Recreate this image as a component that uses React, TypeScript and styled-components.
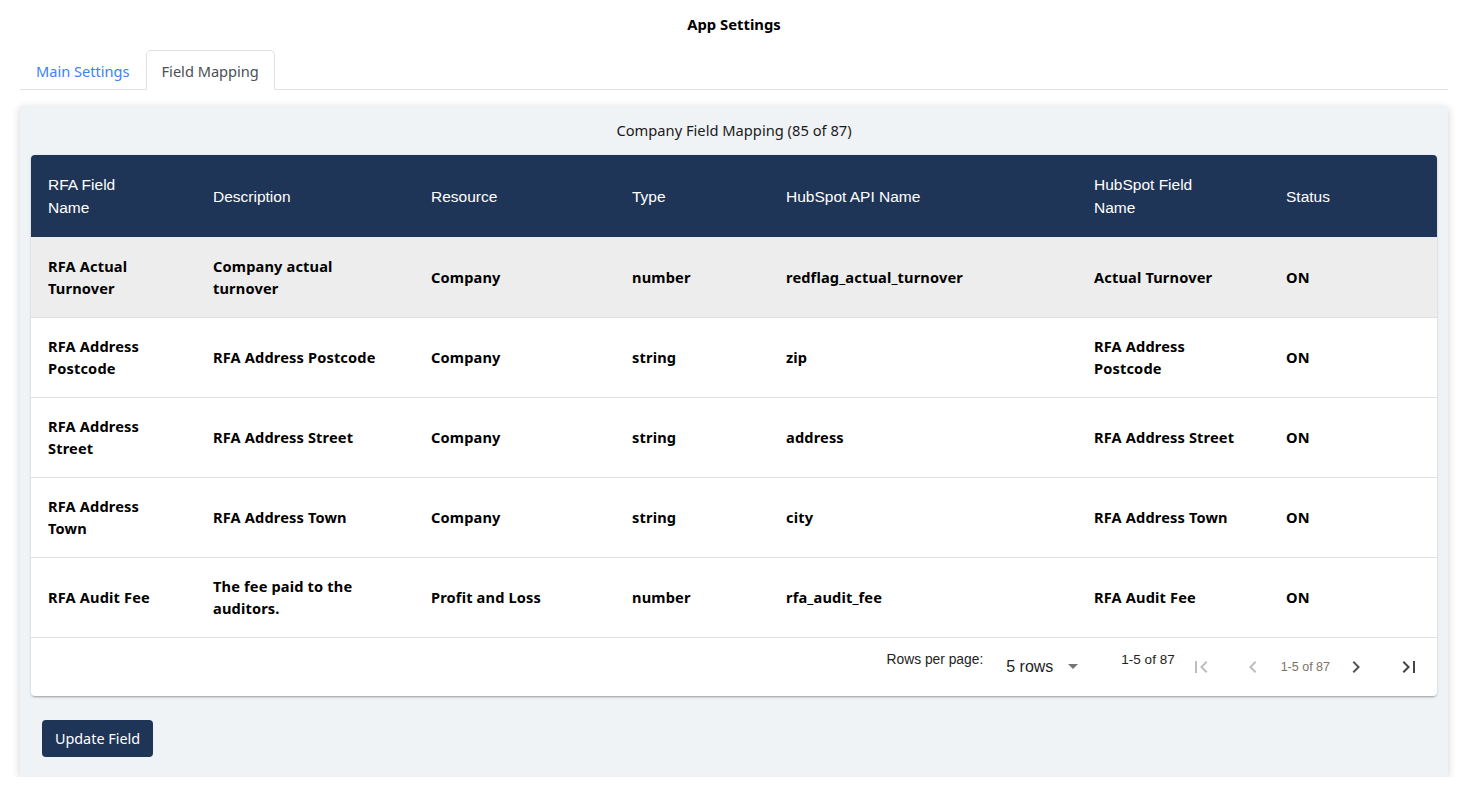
import React from "react";
import styled, { createGlobalStyle } from "styled-components";

const Global = createGlobalStyle`
  html, body { margin: 0; padding: 0; background: #ffffff; }
  body { font-family: "Noto Sans", "Open Sans", sans-serif; color: #000; }
  * { box-sizing: border-box; }
`;

const Page = styled.div`
  padding: 0 13px 0 20px;
`;

const Title = styled.h1`
  margin: 0;
  height: 50px;
  display: flex;
  align-items: center;
  justify-content: center;
  font-size: 14.8px;
  font-weight: 700;
  padding-bottom: 2px;
`;

const TabBar = styled.div`
  display: flex;
  border-bottom: 1px solid #dee2e6;
  height: 40px;
`;

const Tab = styled.div<{ $active?: boolean }>`
  height: 40px;
  padding: 2px 15px 0;
  display: flex;
  align-items: center;
  font-size: 14.6px;
  white-space: nowrap;
  color: ${(p) => (p.$active ? "#495057" : "#3b82f6")};
  background: ${(p) => (p.$active ? "#fff" : "transparent")};
  border: 1px solid ${(p) => (p.$active ? "#dee2e6" : "transparent")};
  border-bottom-color: ${(p) => (p.$active ? "#fff" : "transparent")};
  border-radius: 5px 5px 0 0;
  margin-bottom: -1px;
`;

const Card = styled.section`
  margin-top: 16px;
  background: #f0f3f6;
  box-shadow: 0 2px 8px rgba(0, 0, 0, 0.18);
  padding: 0 11px 20px 11px;
`;

const CardTitle = styled.div`
  height: 49px;
  display: flex;
  align-items: center;
  justify-content: center;
  font-size: 14.7px;
  color: #1a1a1a;
  padding-bottom: 2px;
`;

const Paper = styled.div`
  background: #fff;
  border-radius: 4px;
  box-shadow: 0 2px 2px -1px rgba(0, 0, 0, 0.25), 0 1px 3px 0 rgba(0, 0, 0, 0.14);
  overflow: hidden;
`;

const Table = styled.table`
  width: 100%;
  border-collapse: collapse;
  table-layout: fixed;
`;

const HeadRow = styled.tr`
  background: #1f3557;
  height: 82px;
`;

const Th = styled.th`
  text-align: left;
  font-family: "Liberation Sans", Arial, sans-serif;
  font-weight: 400;
  font-size: 15.5px;
  line-height: 23px;
  color: #fff;
  padding: 0 8px 0 17px;
  vertical-align: middle;
`;

const Row = styled.tr<{ $highlight?: boolean }>`
  height: 80px;
  background: ${(p) => (p.$highlight ? "#ededed" : "#fff")};
  border-bottom: 1px solid #e0e0e0;
`;

const Td = styled.td`
  font-size: 14.6px;
  letter-spacing: 0.15px;
  font-weight: 700;
  line-height: 22px;
  color: #000;
  padding: 0 8px 0 17px;
  vertical-align: middle;
`;

const CellText = styled.div<{ $max: number }>`
  max-width: ${(p) => p.$max}px;
`;

const Footer = styled.div`
  height: 58px;
  display: flex;
  align-items: center;
  justify-content: flex-end;
  padding-right: 8px;
  font-family: "Liberation Sans", Arial, sans-serif;
  white-space: nowrap;
`;

const SmallLabel = styled.span<{ $ml?: number; $size: number }>`
  font-size: ${(p) => p.$size}px;
  color: #222;
  margin-bottom: 14px;
  margin-left: ${(p) => p.$ml ?? 0}px;
  flex-shrink: 0;
`;

const Select = styled.div`
  display: flex;
  align-items: center;
  margin-left: 23px;
  font-size: 16px;
  color: #222;
  flex-shrink: 0;
`;

const Caret = styled.span`
  margin-left: 15px;
  width: 0;
  height: 0;
  border-left: 5px solid transparent;
  border-right: 5px solid transparent;
  border-top: 5px solid #757575;
`;

const IconBtn = styled.span<{ $ml: number; $color: string }>`
  width: 40px;
  height: 40px;
  display: flex;
  align-items: center;
  justify-content: center;
  flex-shrink: 0;
  margin-left: ${(p) => p.$ml}px;
  color: ${(p) => p.$color};
`;

const PageInfo = styled.span`
  font-size: 12.5px;
  color: #7a7364;
  margin-left: 8px;
  flex-shrink: 0;
`;

const Button = styled.button`
  margin-top: 24px;
  margin-left: 11px;
  height: 37px;
  width: 111px;
  padding: 0;
  background: #1f3557;
  color: #fff;
  border: none;
  border-radius: 4px;
  font-family: "Noto Sans", "Open Sans", sans-serif;
  font-size: 14.4px;
`;

const Icon = ({ d }: { d: string }) => (
  <svg width="24" height="24" viewBox="0 0 24 24" fill="currentColor">
    <path d={d} />
  </svg>
);

const FIRST = "M18.41 16.59L13.82 12l4.59-4.59L17 6l-6 6 6 6zM6 6h2v12H6z";
const PREV = "M15.41 7.41L14 6l-6 6 6 6 1.41-1.41L10.83 12z";
const NEXT = "M10 6L8.59 7.41 13.17 12l-4.58 4.59L10 18l6-6z";
const LAST = "M5.59 7.41L10.18 12l-4.59 4.59L7 18l6-6-6-6zM16 6h2v12h-2z";

type Col = { label: string; width: number; headMax: number; bodyMax: number };

const columns: Col[] = [
  { label: "RFA Field Name", width: 165, headMax: 100, bodyMax: 112 },
  { label: "Description", width: 218, headMax: 190, bodyMax: 182 },
  { label: "Resource", width: 201, headMax: 180, bodyMax: 180 },
  { label: "Type", width: 154, headMax: 130, bodyMax: 130 },
  { label: "HubSpot API Name", width: 308, headMax: 280, bodyMax: 280 },
  { label: "HubSpot Field Name", width: 192, headMax: 120, bodyMax: 152 },
  { label: "Status", width: 168, headMax: 140, bodyMax: 140 },
];

const rows = [
  ["RFA Actual Turnover", "Company actual turnover", "Company", "number", "redflag_actual_turnover", "Actual Turnover", "ON"],
  ["RFA Address Postcode", "RFA Address Postcode", "Company", "string", "zip", "RFA Address Postcode", "ON"],
  ["RFA Address Street", "RFA Address Street", "Company", "string", "address", "RFA Address Street", "ON"],
  ["RFA Address Town", "RFA Address Town", "Company", "string", "city", "RFA Address Town", "ON"],
  ["RFA Audit Fee", "The fee paid to the auditors.", "Profit and Loss", "number", "rfa_audit_fee", "RFA Audit Fee", "ON"],
];

export default function App() {
  return (
    <>
      <Global />
      <Page>
        <Title>App Settings</Title>
        <TabBar>
          <Tab>Main Settings</Tab>
          <Tab $active>Field Mapping</Tab>
        </TabBar>
        <Card>
          <CardTitle>Company Field Mapping (85 of 87)</CardTitle>
          <Paper>
            <Table>
              <colgroup>
                {columns.map((c) => (
                  <col key={c.label} style={{ width: c.width }} />
                ))}
              </colgroup>
              <thead>
                <HeadRow>
                  {columns.map((c) => (
                    <Th key={c.label}>
                      <CellText $max={c.headMax}>{c.label}</CellText>
                    </Th>
                  ))}
                </HeadRow>
              </thead>
              <tbody>
                {rows.map((r, i) => (
                  <Row key={i} $highlight={i === 0}>
                    {r.map((v, j) => (
                      <Td key={j}>
                        <CellText $max={columns[j].bodyMax}>{v}</CellText>
                      </Td>
                    ))}
                  </Row>
                ))}
              </tbody>
            </Table>
            <Footer>
              <SmallLabel $size={13.8}>Rows per page:</SmallLabel>
              <Select>
                5 rows
                <Caret />
              </Select>
              <SmallLabel $size={13.5} $ml={43}>1-5 of 87</SmallLabel>
              <IconBtn $ml={6} $color="#bdbdbd">
                <Icon d={FIRST} />
              </IconBtn>
              <IconBtn $ml={12} $color="#bdbdbd">
                <Icon d={PREV} />
              </IconBtn>
              <PageInfo>1-5 of 87</PageInfo>
              <IconBtn $ml={6} $color="#555">
                <Icon d={NEXT} />
              </IconBtn>
              <IconBtn $ml={13} $color="#444">
                <Icon d={LAST} />
              </IconBtn>
            </Footer>
          </Paper>
          <Button>Update Field</Button>
        </Card>
      </Page>
    </>
  );
}
